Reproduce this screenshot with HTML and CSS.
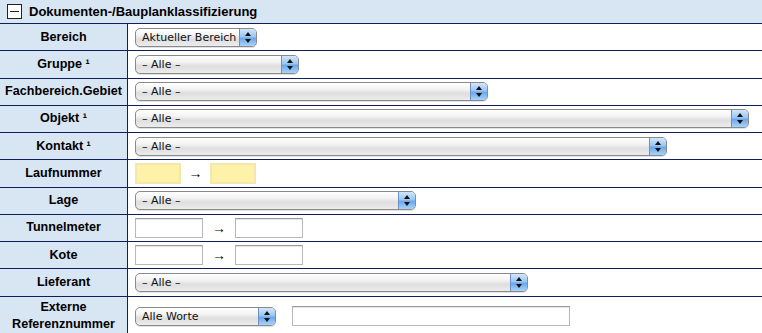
FILE: index.html
```html
<!DOCTYPE html>
<html lang="de">
<head>
  <meta charset="UTF-8">
  <title>Dokumenten-/Bauplanklassifizierung</title>
  <link rel="stylesheet" href="styles.css">
</head>
<body>
  <table class="filter">
    <tr class="head">
      <td colspan="2"><span class="toggle"></span>Dokumenten-/Bauplanklassifizierung</td>
    </tr>
    <tr>
      <th>Bereich</th>
      <td><span class="sel w-bereich"><span class="txt">Aktueller Bereich</span><span class="btn"></span></span></td>
    </tr>
    <tr>
      <th>Gruppe ¹</th>
      <td><span class="sel w-gruppe"><span class="txt">– Alle –</span><span class="btn"></span></span></td>
    </tr>
    <tr>
      <th>Fachbereich.Gebiet</th>
      <td><span class="sel w-fach"><span class="txt">– Alle –</span><span class="btn"></span></span></td>
    </tr>
    <tr>
      <th>Objekt ¹</th>
      <td><span class="sel w-objekt"><span class="txt">– Alle –</span><span class="btn"></span></span></td>
    </tr>
    <tr>
      <th>Kontakt ¹</th>
      <td><span class="sel w-kontakt"><span class="txt">– Alle –</span><span class="btn"></span></span></td>
    </tr>
    <tr>
      <th>Laufnummer</th>
      <td class="range">
        <input class="field hl" type="text"><span class="arrow">→</span><input class="field hl" type="text">
      </td>
    </tr>
    <tr>
      <th>Lage</th>
      <td><span class="sel w-lage"><span class="txt">– Alle –</span><span class="btn"></span></span></td>
    </tr>
    <tr>
      <th>Tunnelmeter</th>
      <td class="range">
        <input class="field num" type="text"><span class="arrow wide">→</span><input class="field num" type="text">
      </td>
    </tr>
    <tr>
      <th>Kote</th>
      <td class="range">
        <input class="field num" type="text"><span class="arrow wide">→</span><input class="field num" type="text">
      </td>
    </tr>
    <tr>
      <th>Lieferant</th>
      <td><span class="sel w-lief"><span class="txt">– Alle –</span><span class="btn"></span></span></td>
    </tr>
    <tr class="last">
      <th>Externe<br>Referenznummer</th>
      <td class="range">
        <span class="sel w-worte"><span class="txt">Alle Worte</span><span class="btn"></span></span><input class="field long" type="text">
      </td>
    </tr>
  </table>
</body>
</html>
```

FILE: styles.css
```css
body {
  margin: 0;
  font-family: "Liberation Sans", Arial, sans-serif;
  background: #fff;
}

.filter {
  width: 762px;
  border-collapse: collapse;
  font-size: 12.6px;
}

.filter td,
.filter th {
  padding: 0;
  height: 26.25px;
  border-top: 1px solid #0f1f5e;
}

.head td {
  height: 23px;
  border-top: none;
  background: #d8e5f2;
  font-weight: bold;
  font-size: 13px;
  color: #000;
  vertical-align: middle;
  padding-left: 5px;
}

.toggle {
  display: inline-block;
  width: 13px;
  height: 13px;
  border: 1px solid #222;
  background: #fff;
  position: relative;
  vertical-align: -3px;
  margin-right: 7px;
}

.toggle::after {
  content: "";
  position: absolute;
  left: 2px;
  right: 2px;
  top: 6px;
  height: 1px;
  background: #222;
}

.filter th {
  width: 127px;
  background: #d8e5f2;
  border-right: 1px solid #0f1f5e;
  text-align: center;
  font-weight: bold;
  line-height: 17px;
}

.filter td {
  padding-left: 7px;
  vertical-align: middle;
}

.last th,
.last td {
  height: 37px;
  padding-top: 1px;
}

.sel {
  display: inline-flex;
  align-items: center;
  height: 17px;
  border: 1px solid #8a8a8a;
  border-radius: 5px;
  background: linear-gradient(#ffffff 0%, #f4f4f4 35%, #dedede 60%, #ececec 100%);
  box-shadow: 0 1px 0 #e2e2e2;
  vertical-align: middle;
  overflow: hidden;
  font-family: "DejaVu Sans", sans-serif;
  font-size: 11px;
  color: #111;
}

.sel .txt {
  flex: 1;
  padding-left: 6px;
  white-space: nowrap;
}

.sel .btn {
  width: 16px;
  height: 17px;
  border-left: 1px solid #6d8fc4;
  background: linear-gradient(#d2e6fb 0%, #9bc6f1 45%, #6aa8ea 55%, #a9d3fb 100%);
  position: relative;
}

.sel .btn::before,
.sel .btn::after {
  content: "";
  position: absolute;
  left: 5px;
  border-left: 3px solid transparent;
  border-right: 3px solid transparent;
}

.sel .btn::before {
  top: 3px;
  border-bottom: 4px solid #111;
}

.sel .btn::after {
  top: 10px;
  border-top: 4px solid #111;
}

.w-bereich { width: 120px; }
.w-gruppe { width: 162px; }
.w-fach { width: 351px; }
.w-objekt { width: 612px; }
.w-kontakt { width: 530px; }
.w-lage { width: 279px; }
.w-lief { width: 391px; }
.w-worte { width: 139px; }

.range {
  white-space: nowrap;
}

.field {
  box-sizing: border-box;
  height: 20px;
  margin: 0;
  padding: 0;
  border: 1px solid #b8b8b8;
  border-top-color: #9a9a9a;
  background: #fff;
  vertical-align: middle;
  box-shadow: inset 0 1px 1px #e4e4e4;
}

.field.hl {
  width: 46px;
  height: 21px;
  background: #fdf2a8;
  border: 2px solid #f2e8ae;
  box-shadow: none;
}

.field.num {
  width: 68px;
}

.field.long {
  width: 278px;
  margin-left: 16px;
}

.arrow {
  display: inline-block;
  width: 29px;
  text-align: center;
  vertical-align: middle;
  font-family: "Liberation Sans", sans-serif;
  font-size: 14px;
}

.arrow.wide {
  width: 32px;
}
```
